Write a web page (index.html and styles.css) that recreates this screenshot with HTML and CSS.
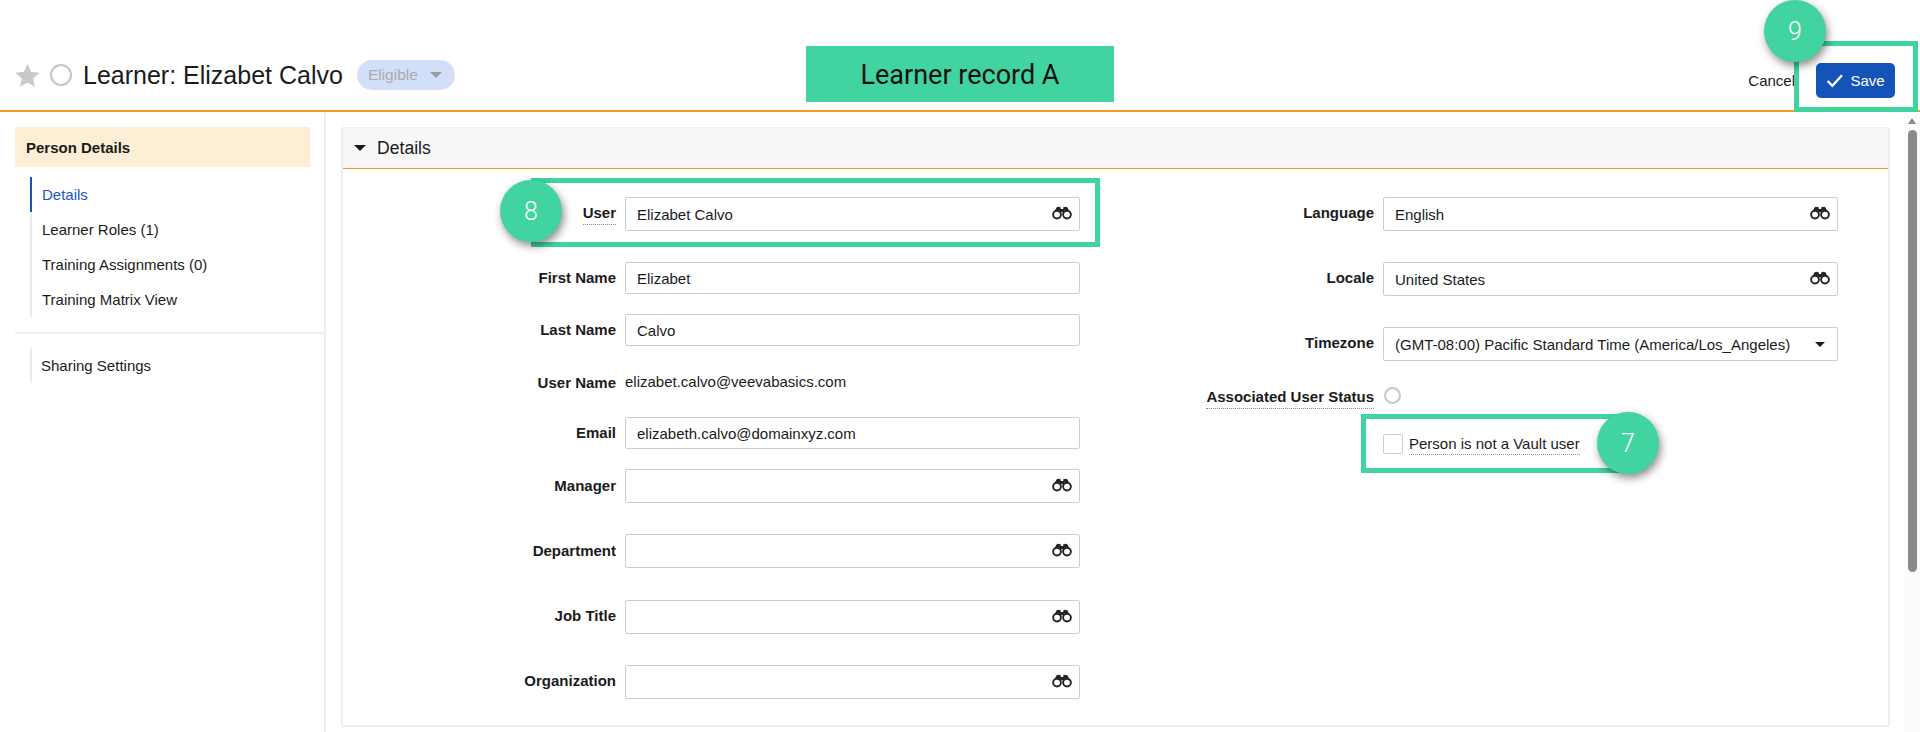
FILE: index.html
```html
<!DOCTYPE html>
<html lang="en">
<head>
<meta charset="utf-8">
<title>Learner record A</title>
<link rel="stylesheet" href="styles.css">
</head>
<body>
<svg class="defs" width="0" height="0" aria-hidden="true">
  <symbol id="bino" viewBox="0 0 20 14">
    <path d="M3.2 5.2 5 1.4h3.2v3M16.8 5.2 15 1.4h-3.2v3" fill="#222" stroke="#222" stroke-width="1"/>
    <rect x="8" y="3" width="4" height="3.2" fill="#222"/>
    <circle cx="5" cy="8.6" r="3.9" fill="#fff" stroke="#222" stroke-width="1.9"/>
    <circle cx="15" cy="8.6" r="3.9" fill="#fff" stroke="#222" stroke-width="1.9"/>
  </symbol>
</svg>
<header class="topbar">
  <div class="title-group">
    <svg class="star" viewBox="0 0 24 24"><path d="M12 .8l3.4 7.6 8.2.9-6.1 5.5 1.7 8.1-7.2-4.1-7.2 4.1 1.7-8.1L.4 9.3l8.2-.9z" fill="#c9c9c9"/></svg>
    <span class="status-ring"></span>
    <h1 class="title">Learner: Elizabet Calvo</h1>
    <span class="pill">Eligible<span class="pill-caret"></span></span>
  </div>
  <div class="actions">
    <span class="cancel">Cancel</span>
    <button class="save" type="button">
      <svg class="check" viewBox="0 0 16 14"><path d="M1.5 7.5 6 12 15 2" fill="none" stroke="#fff" stroke-width="2.2"/></svg>
      Save
    </button>
  </div>
</header>
<main class="layout">
  <nav class="sidebar">
    <div class="side-head">Person Details</div>
    <ul class="side-list">
      <li class="side-item active">Details</li>
      <li class="side-item">Learner Roles (1)</li>
      <li class="side-item">Training Assignments (0)</li>
      <li class="side-item">Training Matrix View</li>
    </ul>
    <div class="side-divider"></div>
    <ul class="side-list">
      <li class="side-item alt">Sharing Settings</li>
    </ul>
  </nav>
  <section class="content">
    <div class="panel">
      <div class="panel-head"><span class="caret"></span>Details</div>
      <div class="panel-body">
        <div class="col">
          <div class="row h65"><span class="label"><span class="dotted">User</span></span><div class="field">Elizabet Calvo<svg class="bino"><use href="#bino"/></svg></div></div>
          <div class="row h52"><span class="label">First Name</span><div class="field short">Elizabet</div></div>
          <div class="row h54"><span class="label">Last Name</span><div class="field short">Calvo</div></div>
          <div class="row h49"><span class="label high">User Name</span><div class="plain">elizabet.calvo@veevabasics.com</div></div>
          <div class="row h52"><span class="label">Email</span><div class="field short">elizabeth.calvo@domainxyz.com</div></div>
          <div class="row h65"><span class="label low">Manager</span><div class="field"><span></span><svg class="bino"><use href="#bino"/></svg></div></div>
          <div class="row h66"><span class="label low">Department</span><div class="field"><span></span><svg class="bino"><use href="#bino"/></svg></div></div>
          <div class="row h65"><span class="label">Job Title</span><div class="field"><span></span><svg class="bino"><use href="#bino"/></svg></div></div>
          <div class="row h65"><span class="label">Organization</span><div class="field"><span></span><svg class="bino"><use href="#bino"/></svg></div></div>
        </div>
        <div class="col right">
          <div class="row h65"><span class="label">Language</span><div class="field">English<svg class="bino"><use href="#bino"/></svg></div></div>
          <div class="row h65"><span class="label">Locale</span><div class="field">United States<svg class="bino"><use href="#bino"/></svg></div></div>
          <div class="row h60"><span class="label">Timezone</span><div class="field select">(GMT-08:00) Pacific Standard Time (America/Los_Angeles)<span class="select-caret"></span></div></div>
          <div class="row h47"><span class="label status"><span class="dotted">Associated User Status</span></span><span class="radio"></span></div>
          <div class="row"><span class="label"></span><span class="checkbox"></span><span class="check-label">Person is not a Vault user</span></div>
        </div>
      </div>
    </div>
  </section>
  <div class="scrollbar"><span class="scroll-up"></span><span class="scroll-thumb"></span></div>
</main>
<div class="banner">Learner record A</div>
<div class="callout box-9"></div>
<div class="callout box-8"></div>
<div class="callout box-7"></div>
<div class="badge badge-9">9</div>
<div class="badge badge-8">8</div>
<div class="badge badge-7">7</div>
</body>
</html>
```
FILE: styles.css
```css
* { box-sizing: border-box; }
html, body { margin: 0; height: 732px; overflow: hidden; background: #fff; }
body { font-family: "Liberation Sans", Arial, sans-serif; font-size: 15px; color: #1b1b1b; position: relative; }
.defs { position: absolute; }

.topbar { height: 112px; border-bottom: 2px solid #f7982b; display: flex; justify-content: space-between; align-items: flex-start; padding: 60px 25px 0 15px; }
.title-group { display: flex; align-items: center; height: 30px; }
.star { width: 25px; height: 25px; }
.status-ring { width: 22px; height: 22px; border: 2px solid #c6c6c6; border-radius: 50%; margin-left: 10px; }
.title { font-size: 25px; font-weight: 400; margin: 0 0 0 11px; line-height: 30px; color: #1b1b1b; }
.pill { margin-left: 14px; width: 98px; height: 30px; border-radius: 15px; background: #d1e0f8; color: #ababab; display: flex; align-items: center; padding-left: 11px; font-size: 15.5px; }
.pill-caret { width: 0; height: 0; border-left: 6px solid transparent; border-right: 6px solid transparent; border-top: 6px solid #9c9c9c; margin-left: 12px; }
.actions { display: flex; align-items: center; margin-top: 3px; }
.cancel { font-size: 15px; margin-right: 21px; }
.save { width: 79px; height: 35px; background: #1453b8; border: 0; border-radius: 5px; color: #fff; font: 15px "Liberation Sans", Arial, sans-serif; display: flex; align-items: center; justify-content: center; gap: 7px; padding: 0; }
.check { width: 17px; height: 15px; }

.layout { display: flex; height: 620px; }
.sidebar { width: 326px; flex: none; border-right: 2px solid #efefef; padding: 15px 0 0 15px; }
.side-head { width: 295px; height: 40px; background: #fdeed6; border-radius: 2px; font-weight: 700; line-height: 41px; padding-left: 11px; }
.side-list { list-style: none; margin: 10px 0 0 15px; padding: 0; }
.side-item { height: 35px; line-height: 36px; border-left: 2px solid #eaeaea; padding-left: 10px; }
.side-item.active { color: #1a56c0; border-left-color: #1453b8; }
.side-item.alt { padding-left: 9px; line-height: 35px; }
.side-divider { height: 2px; background: #efefef; margin-top: 15px; margin-bottom: 14px; }

.content { width: 1578px; padding: 15px 0 0 15px; flex: none; }
.panel { width: 1549px; height: 600px; border: 2px solid #efefef; border-radius: 2px; }
.panel-head { height: 41px; background: #f7f7f7; border-bottom: 1px solid #f7982b; display: flex; align-items: center; font-size: 17.6px; padding-left: 11px; margin-top: -1px; }
.caret { width: 0; height: 0; border-left: 6px solid transparent; border-right: 6px solid transparent; border-top: 6px solid #1b1b1b; margin-right: 11px; }
.panel-body { display: flex; padding-top: 28px; }
.col { width: 756px; flex: none; }
.col.right { margin-left: 2px; }

.row { display: flex; align-items: flex-start; }
.h47 { height: 47px; } .h49 { height: 49px; } .h52 { height: 52px; } .h54 { height: 54px; } .h60 { height: 60px; } .h65 { height: 65px; } .h66 { height: 66px; }
.label { width: 273px; flex: none; margin-right: 9px; text-align: right; font-weight: 700; font-size: 15px; line-height: 18px; padding-top: 7px; }
.label.low { padding-top: 8px; }
.label.high { padding-top: 6px; }
.label.status { padding-top: 1px; }
.dotted { border-bottom: 1px dotted #888; padding-bottom: 3px; }
.field { width: 455px; height: 34px; border: 1px solid #cdcdcd; border-radius: 2px; display: flex; align-items: center; justify-content: space-between; padding: 1px 7px 0 11px; font-size: 15px; }
.field.short { height: 32px; }
.plain { line-height: 18px; padding-top: 5px; }
.bino { width: 20px; height: 14px; margin-top: -3px; }
.select-caret { width: 0; height: 0; border-left: 5px solid transparent; border-right: 5px solid transparent; border-top: 5px solid #1b1b1b; margin-right: 5px; }
.radio { width: 17px; height: 17px; border: 2px solid #c6c6c6; border-radius: 50%; margin-left: 1px; }
.checkbox { width: 20px; height: 20px; border: 1px solid #cdcdcd; border-radius: 2px; }
.check-label { margin-left: 6px; line-height: 20px; border-bottom: 1px dotted #999; }

.scrollbar { flex: 1; position: relative; background: #fcfcfc; display: flex; flex-direction: column; align-items: center; }
.scroll-up { width: 0; height: 0; border-left: 4px solid transparent; border-right: 4px solid transparent; border-bottom: 6px solid #8a8a8a; margin-top: 6px; }
.scroll-thumb { width: 9px; height: 442px; background: #8a8a8a; border-radius: 5px; margin-top: 6px; }

.banner { position: absolute; left: 806px; top: 46px; width: 308px; height: 56px; background: #41d3a0; color: #111; font: 27px/58px Roboto, sans-serif; text-align: center; }
.callout { position: absolute; border: 5px solid #41d3a0; }
.box-9 { left: 1794px; top: 41px; width: 124px; height: 71px; }
.box-8 { left: 531px; top: 178px; width: 569px; height: 69px; }
.box-7 { left: 1361px; top: 414px; width: 265px; height: 59px; }
.badge { position: absolute; width: 62px; height: 62px; border-radius: 50%; background: #41d3a0; color: #fff; font: 300 25px/64px Roboto, sans-serif; text-align: center; box-shadow: 2px 4px 8px rgba(0,0,0,.45); }
.badge-9 { left: 1764px; top: 0; }
.badge-8 { left: 500px; top: 180px; }
.badge-7 { left: 1597px; top: 412px; }
```
